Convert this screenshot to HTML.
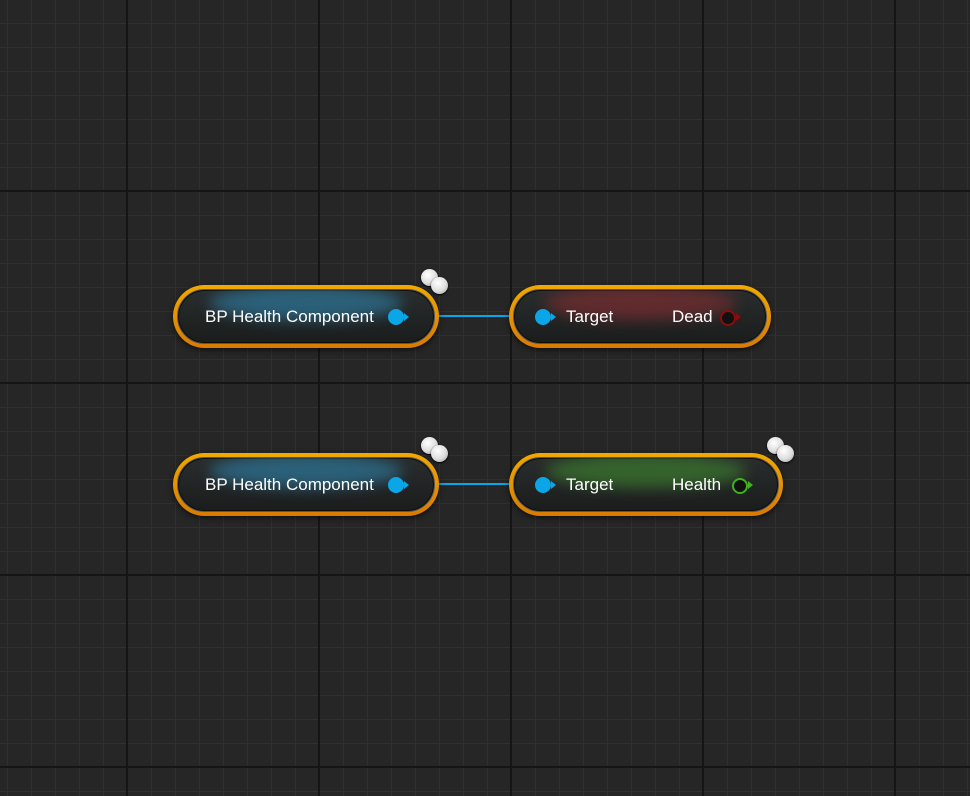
<!DOCTYPE html>
<html><head><style>
body{margin:0;width:970px;height:796px;overflow:hidden;background:#262626;font-family:"Liberation Sans",sans-serif;}
.grid{position:absolute;inset:0;
background-image:
linear-gradient(to right,#151515 2px,transparent 2px),
linear-gradient(to bottom,#151515 2px,transparent 2px),
linear-gradient(to right,#303030 1px,transparent 1px),
linear-gradient(to bottom,#303030 1px,transparent 1px);
background-size:192px 192px,192px 192px,24px 24px,24px 24px;
background-position:126px 190px,126px 190px,7px 23px,7px 23px;}
.node{position:absolute;height:63px;box-sizing:border-box;border-radius:32px;
background:linear-gradient(#f2a900,#d97a00);padding:4px;box-shadow:0 2px 6px rgba(0,0,0,.6);}
.in{height:100%;border-radius:28px;background:linear-gradient(#2a2d2d,#1b1d1d);position:relative;overflow:hidden;border:1px solid #555;box-shadow:inset 0 0 0 1px #0c0c0c;box-sizing:border-box;}
.glow{position:absolute;left:12%;right:12%;top:-4px;height:34px;border-radius:50%;filter:blur(7px);opacity:.6}
.txt{position:absolute;top:17px;color:#fff;font-size:17px;}
.pin{position:absolute;width:16px;height:16px;border-radius:50%;top:19px;}
.tri{position:absolute;width:0;height:0;border-top:4px solid transparent;border-bottom:4px solid transparent;top:23px}
.wire{position:absolute;height:2px;background:#0aa6e8;}
.ball{position:absolute;width:17px;height:17px;border-radius:50%;background:radial-gradient(circle at 40% 35%,#fff,#ddd 55%,#999);box-shadow:0 1px 2px #000}
</style></head><body>
<div class="grid"></div>
<div class="wire" style="left:410px;top:315px;width:110px"></div>
<div class="wire" style="left:410px;top:483px;width:110px"></div>

<div class="node" style="left:173px;top:285px;width:266px"><div class="in">
<div class="glow" style="background:#2f86b0"></div>
<div class="txt" style="left:27px">BP Health Component</div>
<div class="pin" style="left:210px;background:#0aa6e8"></div><div class="tri" style="left:226px;border-left:5px solid #0aa6e8"></div>
</div></div>
<div class="ball" style="left:421px;top:269px"></div><div class="ball" style="left:431px;top:277px"></div>

<div class="node" style="left:509px;top:285px;width:262px"><div class="in">
<div class="glow" style="background:#8a2e33"></div>
<div class="pin" style="left:21px;background:#0aa6e8"></div><div class="tri" style="left:37px;border-left:5px solid #0aa6e8"></div>
<div class="txt" style="left:52px">Target</div>
<div class="txt" style="left:158px">Dead</div>
<div class="pin" style="left:206px;width:12px;height:12px;top:20px;border:2px solid #8a0c0c;background:#111"></div><div class="tri" style="left:222px;border-left:5px solid #8a0c0c"></div>
</div></div>

<div class="node" style="left:173px;top:453px;width:266px"><div class="in">
<div class="glow" style="background:#2f86b0"></div>
<div class="txt" style="left:27px">BP Health Component</div>
<div class="pin" style="left:210px;background:#0aa6e8"></div><div class="tri" style="left:226px;border-left:5px solid #0aa6e8"></div>
</div></div>
<div class="ball" style="left:421px;top:437px"></div><div class="ball" style="left:431px;top:445px"></div>

<div class="node" style="left:509px;top:453px;width:274px"><div class="in">
<div class="glow" style="background:#3f8a30"></div>
<div class="pin" style="left:21px;background:#0aa6e8"></div><div class="tri" style="left:37px;border-left:5px solid #0aa6e8"></div>
<div class="txt" style="left:158px">Health</div>
<div class="txt" style="left:52px">Target</div>
<div class="pin" style="left:218px;width:12px;height:12px;top:20px;border:2px solid #3fb21a;background:#111"></div><div class="tri" style="left:234px;border-left:5px solid #3fb21a"></div>
</div></div>
<div class="ball" style="left:767px;top:437px"></div><div class="ball" style="left:777px;top:445px"></div>
</body></html>
